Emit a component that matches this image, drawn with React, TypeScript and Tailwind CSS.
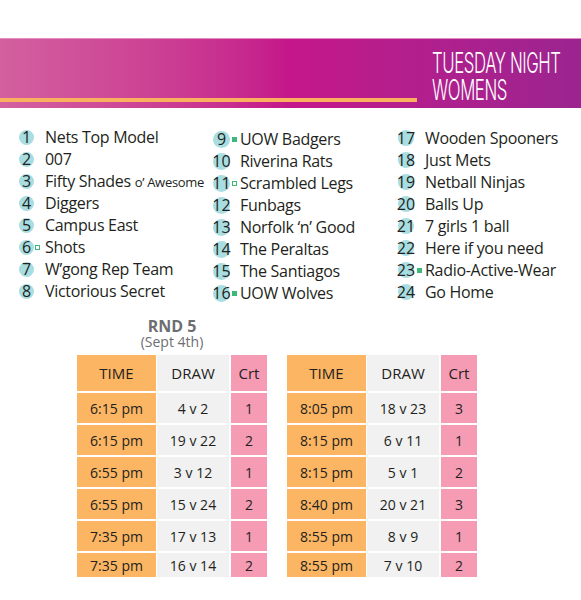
import React from "react";

type Team = { n: number; name: React.ReactNode; mark?: "solid" | "hollow" };

const columns: { left: number; slot: number; circle: number; markLeft: number; top: number; teams: Team[] }[] = [
  {
    left: 19,
    slot: 26,
    circle: 15,
    markLeft: 16,
    top: 126,
    teams: [
      { n: 1, name: "Nets Top Model" },
      { n: 2, name: "007" },
      {
        n: 3,
        name: (
          <>
            Fifty Shades <span className="text-[13px]">o’ Awesome</span>
          </>
        ),
      },
      { n: 4, name: "Diggers" },
      { n: 5, name: "Campus East" },
      { n: 6, name: "Shots", mark: "hollow" },
      { n: 7, name: "W’gong Rep Team" },
      { n: 8, name: "Victorious Secret" },
    ],
  },
  {
    left: 213,
    slot: 27,
    circle: 17,
    markLeft: 19,
    top: 128,
    teams: [
      { n: 9, name: "UOW Badgers", mark: "solid" },
      { n: 10, name: "Riverina Rats" },
      { n: 11, name: "Scrambled Legs", mark: "hollow" },
      { n: 12, name: "Funbags" },
      { n: 13, name: "Norfolk ‘n’ Good" },
      { n: 14, name: "The Peraltas" },
      { n: 15, name: "The Santiagos" },
      { n: 16, name: "UOW Wolves", mark: "solid" },
    ],
  },
  {
    left: 398,
    slot: 27,
    circle: 16,
    markLeft: 19,
    top: 127,
    teams: [
      { n: 17, name: "Wooden Spooners" },
      { n: 18, name: "Just Mets" },
      { n: 19, name: "Netball Ninjas" },
      { n: 20, name: "Balls Up" },
      { n: 21, name: "7 girls 1 ball" },
      { n: 22, name: "Here if you need" },
      { n: 23, name: "Radio-Active-Wear", mark: "solid" },
      { n: 24, name: "Go Home" },
    ],
  },
];

const leftGames = [
  ["6:15 pm", "4 v 2", "1"],
  ["6:15 pm", "19 v 22", "2"],
  ["6:55 pm", "3 v 12", "1"],
  ["6:55 pm", "15 v 24", "2"],
  ["7:35 pm", "17 v 13", "1"],
  ["7:35 pm", "16 v 14", "2"],
];

const rightGames = [
  ["8:05 pm", "18 v 23", "3"],
  ["8:15 pm", "6 v 11", "1"],
  ["8:15 pm", "5 v 1", "2"],
  ["8:40 pm", "20 v 21", "3"],
  ["8:55 pm", "8 v 9", "1"],
  ["8:55 pm", "7 v 10", "2"],
];

function DrawTable({ games }: { games: string[][] }) {
  return (
    <div className="flex flex-col gap-[2px] text-[#231f20]">
      {/* header */}
      <div className="flex h-[36px] text-[15px]">
        <div className="w-[79px] bg-[#fbb563] flex items-center justify-center">TIME</div>
        <div className="ml-[1px] w-[72px] bg-[#f1f1f1] flex items-center justify-center">DRAW</div>
        <div className="ml-[2px] w-[36px] bg-[#f59bb4] flex items-center justify-center">Crt</div>
      </div>
      {games.map((g, i) => (
        <div key={i} className={`flex text-[14px] ${i === games.length - 1 ? "h-[24px]" : "h-[30px]"}`}>
          <div className="w-[79px] bg-[#fbb563] flex items-center justify-center">{g[0]}</div>
          <div className="ml-[1px] w-[72px] bg-[#f1f1f1] flex items-center justify-center">{g[1]}</div>
          <div className="ml-[2px] w-[36px] bg-[#f59bb4] flex items-center justify-center">{g[2]}</div>
        </div>
      ))}
    </div>
  );
}

export default function App() {
  return (
    <div className="w-[581px] h-[600px] bg-white font-['Open_Sans',sans-serif] overflow-hidden">
      {/* Banner */}
      <div className="mt-[38px] h-[70px] flex border-t border-[#e48cc0] bg-linear-to-r from-[#d3609f] via-[#c4168a] to-[#9b2490]">
        <div className="flex-1 flex flex-col justify-end pb-[6px]">
          <div className="h-[4px] w-[417px] bg-[#f9b05f]" />
        </div>
        <div className="w-[149px] pt-[11px] text-white font-['Inter',sans-serif] font-light text-[28px] leading-[27px] tracking-tight">
          <div className="origin-left scale-x-[0.6] whitespace-nowrap">TUESDAY NIGHT</div>
          <div className="origin-left scale-x-[0.6] whitespace-nowrap">WOMENS</div>
        </div>
      </div>

      {/* Team list */}
      <div className="relative h-[200px]">
        {columns.map((col, ci) => (
          <div
            key={ci}
            className="absolute flex flex-col"
            style={{ left: col.left, top: col.top - 108 }}
          >
            {col.teams.map((t) => (
              <div key={t.n} className="flex items-center h-[22px] text-[16px] text-[#231f20] whitespace-nowrap">
                <div className="relative h-full flex items-center" style={{ width: col.slot }}>
                  <div
                    className="rounded-full bg-[#a8dde1] flex items-center justify-center"
                    style={{ width: col.circle, height: col.circle }}
                  >
                    <span className="leading-none">{t.n}</span>
                  </div>
                  {t.mark === "solid" && (
                    <div className="absolute top-[9px] w-[5px] h-[5px] bg-[#3cb878]" style={{ left: col.markLeft }} />
                  )}
                  {t.mark === "hollow" && (
                    <div
                      className="absolute top-[9px] w-[5px] h-[5px] border border-[#3cb878]"
                      style={{ left: col.markLeft }}
                    />
                  )}
                </div>
                <span className="tracking-[-0.3px]">{t.name}</span>
              </div>
            ))}
          </div>
        ))}
      </div>

      {/* Schedule */}
      <div className="mt-[11px] pl-[77px]">
        <div className="w-[190px] text-center text-[#6d6e71]">
          <div className="text-[16px] font-bold leading-[15px]">RND 5</div>
          <div className="text-[14px] leading-[16px]">(Sept 4th)</div>
        </div>
        <div className="mt-[5px] flex gap-[20px]">
          <DrawTable games={leftGames} />
          <DrawTable games={rightGames} />
        </div>
      </div>
    </div>
  );
}
